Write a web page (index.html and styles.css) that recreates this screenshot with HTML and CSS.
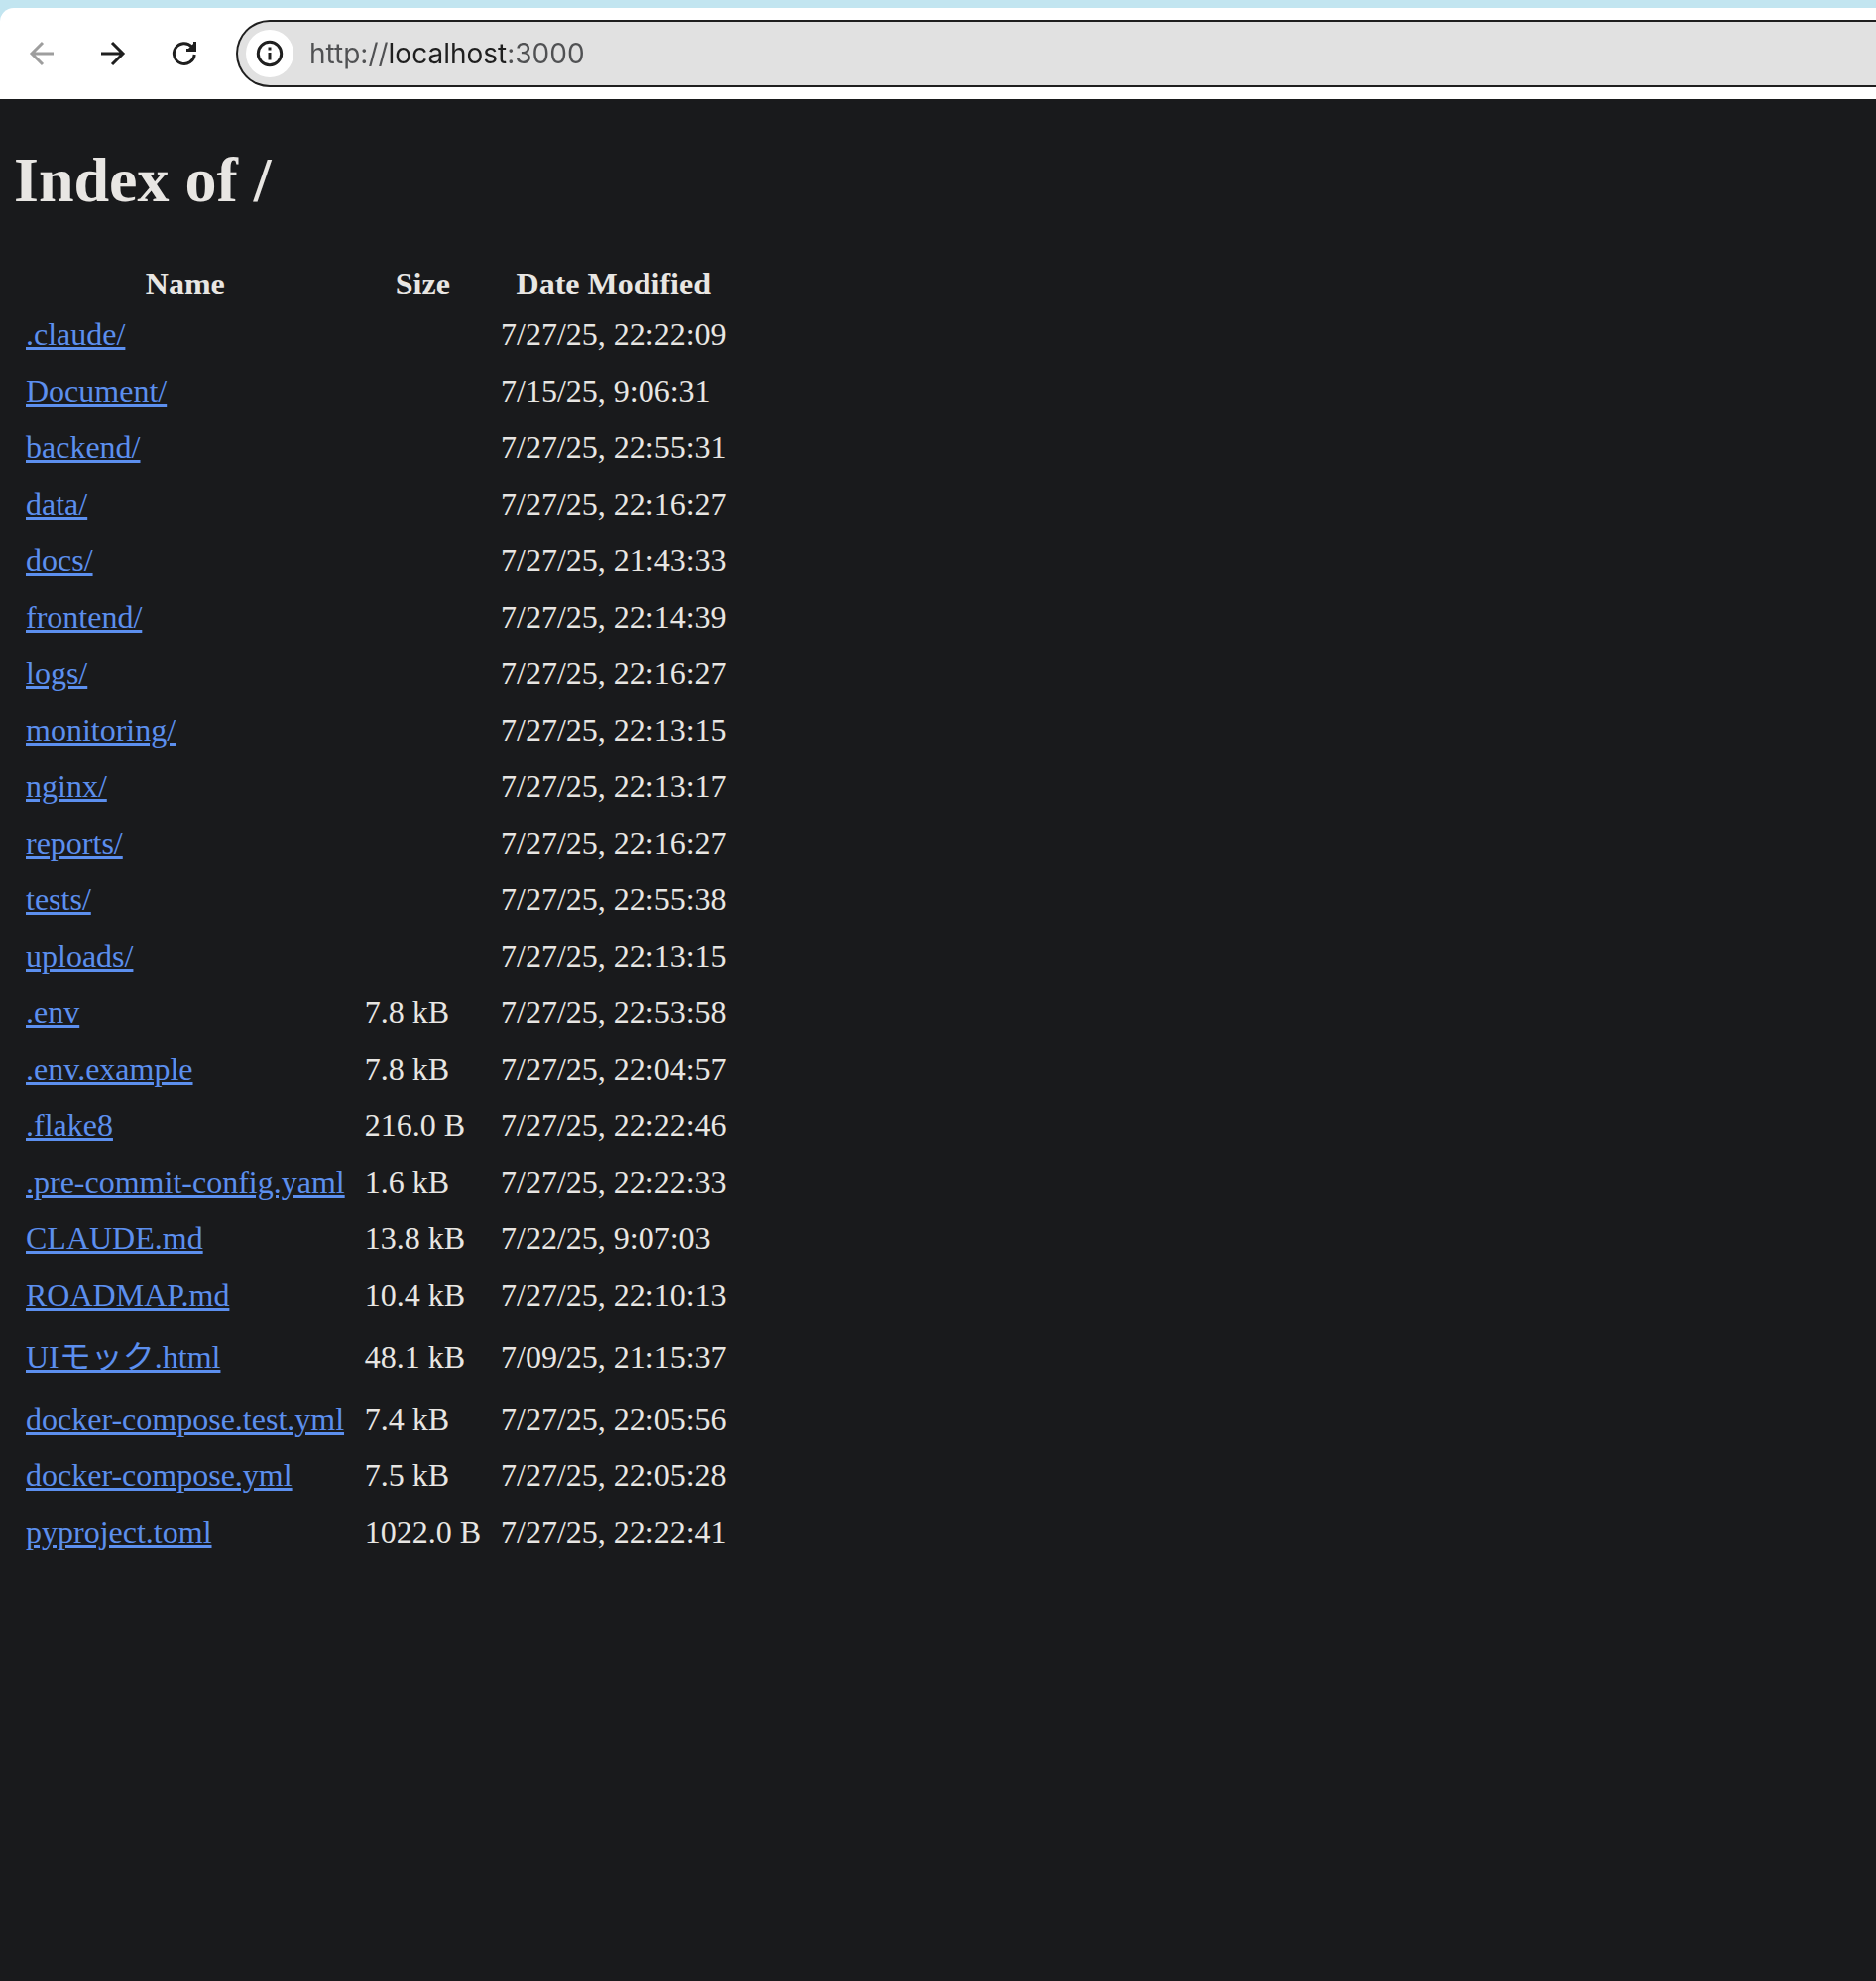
FILE: index.html
```html
<!DOCTYPE html>
<html lang="en">
<head>
<meta charset="utf-8">
<title>Index of /</title>
<link rel="stylesheet" href="styles.css">
</head>
<body>
<div class="frame">
<header class="toolbar">
  <button class="nav-button" type="button" aria-label="Back" disabled>
    <svg class="icon" viewBox="0 0 32 32" aria-hidden="true"><path d="M28 16H6M17 5 6 16l11 11"/></svg>
  </button>
  <button class="nav-button" type="button" aria-label="Forward">
    <svg class="icon" viewBox="0 0 32 32" aria-hidden="true"><path d="M4 16h22M15 5l11 11-11 11"/></svg>
  </button>
  <button class="nav-button" type="button" aria-label="Reload">
    <svg class="icon" viewBox="0 0 32 32" aria-hidden="true"><path d="M26.2 17A10.400 10.400 0 1 1 23.500 9"/><path d="M26.500 4v8.500H18"/><path class="solid" d="M26 5v7h-7z"/></svg>
  </button>
  <form class="address">
    <button class="site-info" type="button" aria-label="View site information">
      <svg class="icon" viewBox="0 0 32 32" aria-hidden="true"><circle cx="16" cy="16" r="11.700"/><path d="M16 15v7.500M16 9.500v3"/></svg>
    </button>
    <input class="url" type="text" aria-label="Address" value="http://localhost:3000" spellcheck="false">
  </form>
</header>
</div>
<main class="listing">
  <h1 class="title">Index of /</h1>
  <table class="files">
    <thead>
      <tr><th scope="col">Name</th><th scope="col">Size</th><th scope="col">Date Modified</th></tr>
    </thead>
    <tbody>
      <tr><td><a href="#">.claude/</a></td><td></td><td>7/27/25, 22:22:09</td></tr>
      <tr><td><a href="#">Document/</a></td><td></td><td>7/15/25, 9:06:31</td></tr>
      <tr><td><a href="#">backend/</a></td><td></td><td>7/27/25, 22:55:31</td></tr>
      <tr><td><a href="#">data/</a></td><td></td><td>7/27/25, 22:16:27</td></tr>
      <tr><td><a href="#">docs/</a></td><td></td><td>7/27/25, 21:43:33</td></tr>
      <tr><td><a href="#">frontend/</a></td><td></td><td>7/27/25, 22:14:39</td></tr>
      <tr><td><a href="#">logs/</a></td><td></td><td>7/27/25, 22:16:27</td></tr>
      <tr><td><a href="#">monitoring/</a></td><td></td><td>7/27/25, 22:13:15</td></tr>
      <tr><td><a href="#">nginx/</a></td><td></td><td>7/27/25, 22:13:17</td></tr>
      <tr><td><a href="#">reports/</a></td><td></td><td>7/27/25, 22:16:27</td></tr>
      <tr><td><a href="#">tests/</a></td><td></td><td>7/27/25, 22:55:38</td></tr>
      <tr><td><a href="#">uploads/</a></td><td></td><td>7/27/25, 22:13:15</td></tr>
      <tr><td><a href="#">.env</a></td><td>7.8 kB</td><td>7/27/25, 22:53:58</td></tr>
      <tr><td><a href="#">.env.example</a></td><td>7.8 kB</td><td>7/27/25, 22:04:57</td></tr>
      <tr><td><a href="#">.flake8</a></td><td>216.0 B</td><td>7/27/25, 22:22:46</td></tr>
      <tr><td><a href="#">.pre-commit-config.yaml</a></td><td>1.6 kB</td><td>7/27/25, 22:22:33</td></tr>
      <tr><td><a href="#">CLAUDE.md</a></td><td>13.8 kB</td><td>7/22/25, 9:07:03</td></tr>
      <tr><td><a href="#">ROADMAP.md</a></td><td>10.4 kB</td><td>7/27/25, 22:10:13</td></tr>
      <tr class="tall"><td><a href="#" lang="ja">UIモック.html</a></td><td>48.1 kB</td><td>7/09/25, 21:15:37</td></tr>
      <tr><td><a href="#">docker-compose.test.yml</a></td><td>7.4 kB</td><td>7/27/25, 22:05:56</td></tr>
      <tr><td><a href="#">docker-compose.yml</a></td><td>7.5 kB</td><td>7/27/25, 22:05:28</td></tr>
      <tr><td><a href="#">pyproject.toml</a></td><td>1022.0 B</td><td>7/27/25, 22:22:41</td></tr>
    </tbody>
  </table>
</main>
</body>
</html>
```
FILE: styles.css
```css
* {
  box-sizing: border-box;
}

body {
  margin: 0;
  min-height: 100vh;
  background: #191a1c;
  color: #e8e6e3;
  font-family: "Liberation Serif", "Noto Sans CJK JP", serif;
  font-size: 32px;
}

/* Browser bar */
.frame {
  padding-top: 8px;
  background: #c2e5f0;
}

.toolbar {
  display: flex;
  align-items: center;
  gap: 24px;
  padding: 12px 0 12px 18px;
  overflow: hidden;
  background: #fff;
  border-top-left-radius: 14px;
}

.nav-button,
.site-info {
  display: flex;
  align-items: center;
  justify-content: center;
  flex: none;
  width: 48px;
  height: 48px;
  padding: 0;
  border: 0;
  border-radius: 50%;
  background: #fff;
  color: #1f1f1f;
}

.nav-button:disabled {
  color: #9e9e9e;
}

.icon {
  width: 32px;
  height: 32px;
  fill: none;
  stroke: currentColor;
  stroke-width: 3;
}

.icon .solid {
  fill: currentColor;
  stroke: none;
}

.address {
  display: flex;
  align-items: center;
  flex: 1;
  gap: 16px;
  height: 68px;
  margin: 0 0 0 4px;
  padding-left: 8px;
  border: 2px solid #1f1f1f;
  border-right: 0;
  border-radius: 34px 0 0 34px;
  background: #e1e1e1;
}

.url {
  flex: 1;
  min-width: 0;
  padding: 0;
  border: 0;
  outline: 0;
  background: linear-gradient(to right, #505153 79px, #1f1f1f 79px, #1f1f1f 198px, #505153 198px) text;
  color: transparent;
  font: 28px/40px Inter, sans-serif;
}

/* Directory listing */
.listing {
  padding: 45px 14px;
}

.title {
  margin: 0 0 43px;
  font-size: 64px;
  line-height: 74px;
}

.files {
  margin-left: 2px;
  border-spacing: 0;
  line-height: 37px;
}

.files th {
  padding: 6px 10px 4px;
}

.files td {
  padding: 10px;
}

.files .tall {
  height: 68px;
}

.files a {
  color: #5c8fee;
  text-decoration-thickness: 3px;
  text-underline-offset: 2px;
}
```
